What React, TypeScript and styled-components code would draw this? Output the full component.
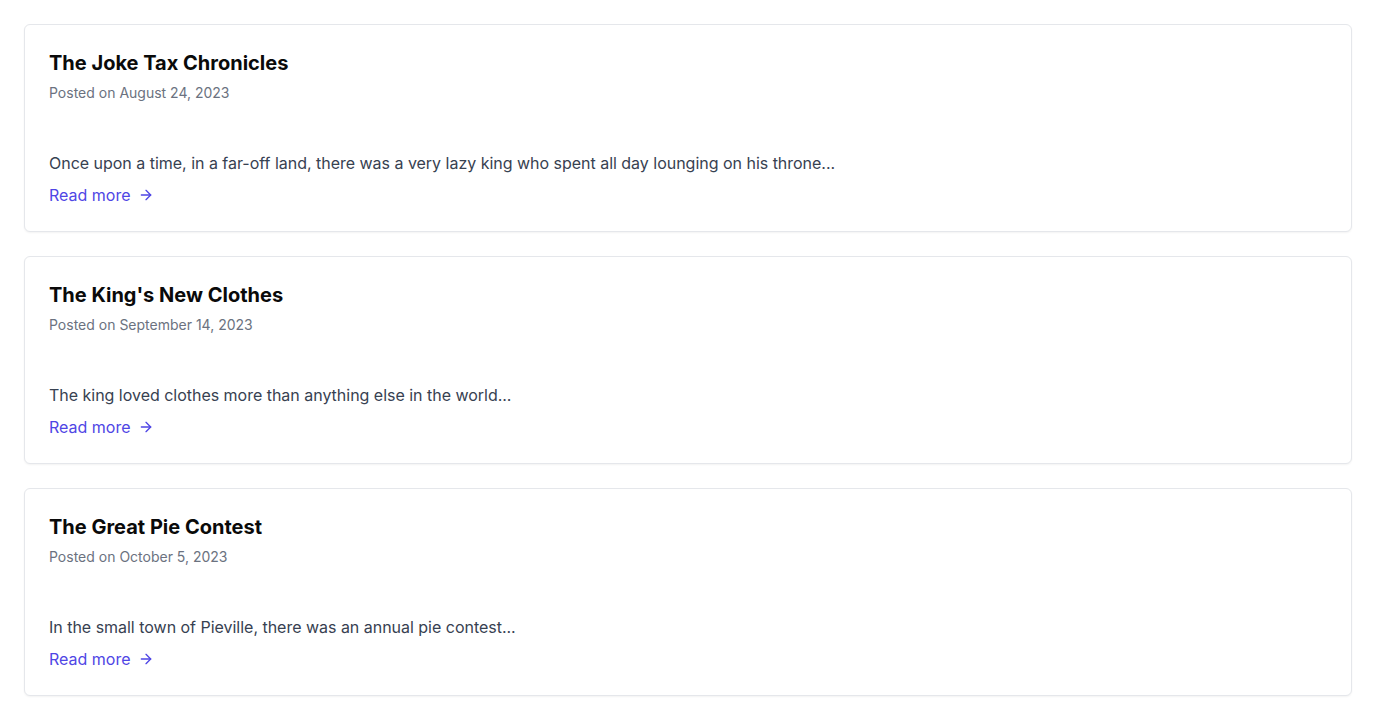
import React from 'react';
import styled, { createGlobalStyle } from 'styled-components';
import { ArrowRight } from 'lucide-react';

const GlobalStyle = createGlobalStyle`
  * { box-sizing: border-box; }
  body {
    margin: 0;
    background: #ffffff;
    font-family: Inter, "Noto Sans", sans-serif;
    -webkit-font-smoothing: antialiased;
  }
`;

interface Post {
  title: string;
  date: string;
  excerpt: string;
}

const posts: Post[] = [
  {
    title: 'The Joke Tax Chronicles',
    date: 'August 24, 2023',
    excerpt:
      'Once upon a time, in a far-off land, there was a very lazy king who spent all day lounging on his throne...',
  },
  {
    title: "The King's New Clothes",
    date: 'September 14, 2023',
    excerpt: 'The king loved clothes more than anything else in the world...',
  },
  {
    title: 'The Great Pie Contest',
    date: 'October 5, 2023',
    excerpt: 'In the small town of Pieville, there was an annual pie contest...',
  },
];

const List = styled.main`
  display: flex;
  flex-direction: column;
  gap: 24px;
  padding: 24px;
`;

const Card = styled.article`
  background: #ffffff;
  border: 1px solid #e5e7eb;
  border-radius: 6px;
  box-shadow: 0 1px 2px 0 rgba(0, 0, 0, 0.05);
`;

const Header = styled.header`
  display: flex;
  flex-direction: column;
  gap: 6px;
  padding: 24px;
`;

const Title = styled.h2`
  margin: 0;
  font-size: 20px;
  line-height: 28px;
  font-weight: 700;
  color: #0a0a0a;
`;

const Meta = styled.p`
  margin: 0;
  font-size: 14px;
  line-height: 20px;
  color: #6b7280;
`;

const Body = styled.div`
  padding: 24px;
`;

const Excerpt = styled.p`
  margin: 0;
  font-size: 16px;
  line-height: 24px;
  color: #374151;
  letter-spacing: -0.02px;
`;

const ReadMore = styled.a`
  display: inline-flex;
  align-items: center;
  gap: 7px;
  margin-top: 8px;
  font-size: 16px;
  line-height: 24px;
  color: #4f46e5;
  text-decoration: none;
  cursor: pointer;
`;

const PostCard: React.FC<Post> = ({ title, date, excerpt }) => (
  <Card>
    <Header>
      <Title>{title}</Title>
      <Meta>Posted on {date}</Meta>
    </Header>
    <Body>
      <Excerpt>{excerpt}</Excerpt>
      <ReadMore>
        Read more
        <ArrowRight size={16} strokeWidth={2} />
      </ReadMore>
    </Body>
  </Card>
);

const App: React.FC = () => (
  <>
    <GlobalStyle />
    <List>
      {posts.map((p) => (
        <PostCard key={p.title} {...p} />
      ))}
    </List>
  </>
);

export default App;
